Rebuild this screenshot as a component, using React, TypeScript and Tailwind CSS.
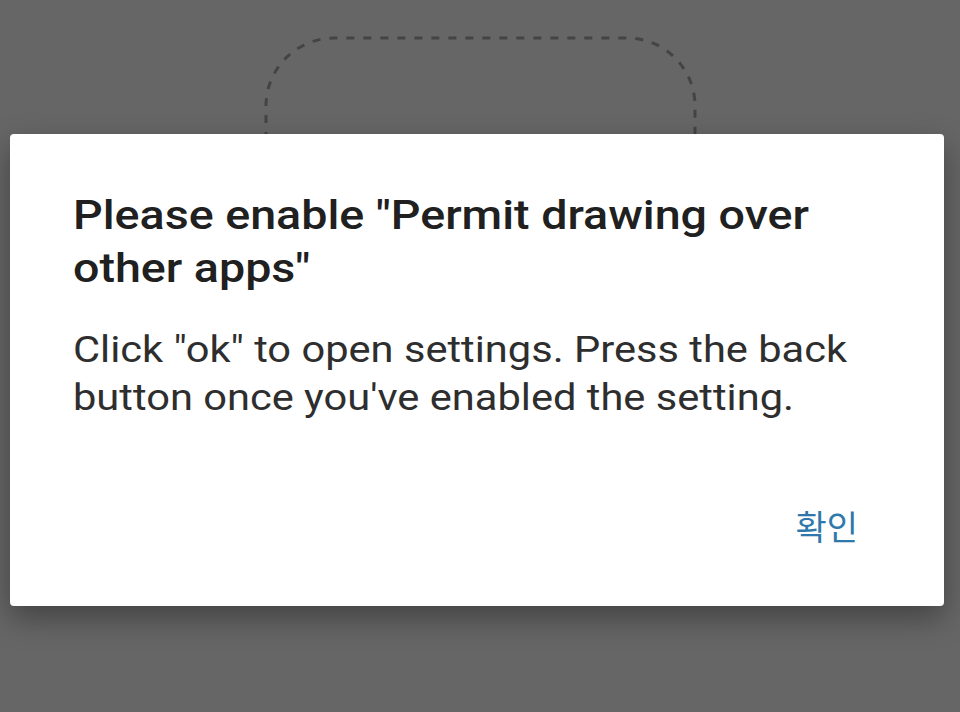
import React from "react";

export default function App() {
  return (
    <div className="relative w-[960px] h-[712px] overflow-hidden bg-[#666666]" style={{ fontFamily: "Roboto, 'Noto Sans CJK KR', sans-serif" }}>
      <svg className="absolute left-0 top-0" width="960" height="712">
        <path
          d="M266 140 L266 106 A68 68 0 0 1 334 38 L627 38 A68 68 0 0 1 695 106 L695 140"
          fill="none"
          stroke="#444444"
          strokeWidth="3"
          strokeDasharray="8 9"
        />
      </svg>
      <div className="absolute left-[10px] top-[134px] w-[934px] h-[472px] bg-white rounded-[4px] shadow-[0_12px_30px_rgba(0,0,0,0.35)] flex flex-col pl-[63px] pt-[55px]">
        <div className="w-[693px] origin-left scale-x-[1.165] text-[40px] leading-[53px] font-medium text-[#202020]">
          Please enable "Permit drawing over other apps"
        </div>
        <div className="mt-[31px] w-[718px] origin-left scale-x-[1.125] text-[37px] leading-[48px] text-[#2e2e2e]">
          Click "ok" to open settings. Press the back button once you've enabled the setting.
        </div>
        <div className="flex-1" />
        <div className="flex justify-end pb-[60px] pr-[86px]">
          <span className="text-[34px] leading-[40px] text-[#2f78ab]" style={{ fontFamily: "'Noto Sans CJK KR', sans-serif" }}>확인</span>
        </div>
      </div>
    </div>
  );
}
